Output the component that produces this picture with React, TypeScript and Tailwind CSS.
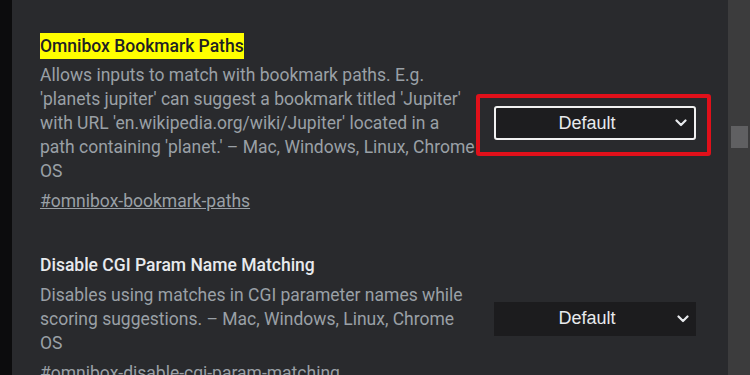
const Chevron = () => (
  <svg width="12" height="8" viewBox="0 0 12 8" className="absolute right-[7px] top-1/2 -translate-y-1/2">
    <path d="M1.5 1.5 L6 6 L10.5 1.5" fill="none" stroke="#e8eaed" strokeWidth="2.2" strokeLinecap="round" strokeLinejoin="round" />
  </svg>
);

const Select = ({ bordered }: { bordered?: boolean }) => (
  <div
    className={
      bordered
        ? "relative w-[202px] h-[34px] rounded-[3px] border-2 border-[#f1f1f1] bg-[#1d1d1f] flex items-center justify-center"
        : "relative w-[202px] h-[34px] bg-[#1c1c1e] flex items-center justify-center"
    }
  >
    <span className="text-[18px] text-[#e8eaed] pr-[16px]" style={{ fontFamily: '"Liberation Sans", Arial, sans-serif' }}>
      Default
    </span>
    <Chevron />
  </div>
);

export default function App() {
  return (
    <div className="flex w-[750px] h-[375px] overflow-hidden" style={{ fontFamily: 'Roboto, "Noto Sans", sans-serif' }}>
      <div className="w-[12px] bg-[#0c0c0d]" />
      <div className="flex-1 bg-[#292a2d] pl-[28px] pt-[33px]">
        <div className="flex items-center">
          <div className="w-[436px]">
            <div className="inline-block bg-[#ffff00] text-[#202124] text-[17.5px] font-medium leading-[26px]">Omnibox Bookmark Paths</div>
            <p className="mt-[4px] text-[17.5px] leading-[24px] text-[#9aa0a6]">
              Allows inputs to match with bookmark paths. E.g. 'planets jupiter' can suggest a bookmark titled 'Jupiter' with URL
              'en.wikipedia.org/wiki/Jupiter' located in a path containing 'planet.' – Mac, Windows, Linux, Chrome OS
            </p>
            <a className="mt-[6px] block text-[17.5px] leading-[24px] text-[#9aa0a6] underline">#omnibox-bookmark-paths</a>
          </div>
          <div className="relative ml-[18px]">
            <span className="absolute -left-[18px] -top-[12px] -right-[15px] -bottom-[16px] border-4 border-[#e0101a] rounded-[3px]" />
            <Select bordered />
          </div>
        </div>

        <div className="mt-[39px] flex items-center">
          <div className="w-[436px]">
            <div className="text-[#e8eaed] text-[17.5px] font-medium leading-[26px]">Disable CGI Param Name Matching</div>
            <p className="mt-[5px] text-[17.5px] leading-[24px] text-[#9aa0a6]">
              Disables using matches in CGI parameter names while scoring suggestions. – Mac, Windows, Linux, Chrome OS
            </p>
            <a className="mt-[6px] block text-[17.5px] leading-[24px] text-[#9aa0a6] underline">#omnibox-disable-cgi-param-matching</a>
          </div>
          <div className="ml-[18px]">
            <Select />
          </div>
        </div>
      </div>
      <div className="w-[22px] bg-[#3c3c3d] pl-[3px] pt-[126px]">
        <div className="w-[17px] h-[22px] bg-[#606062]" />
      </div>
    </div>
  );
}
